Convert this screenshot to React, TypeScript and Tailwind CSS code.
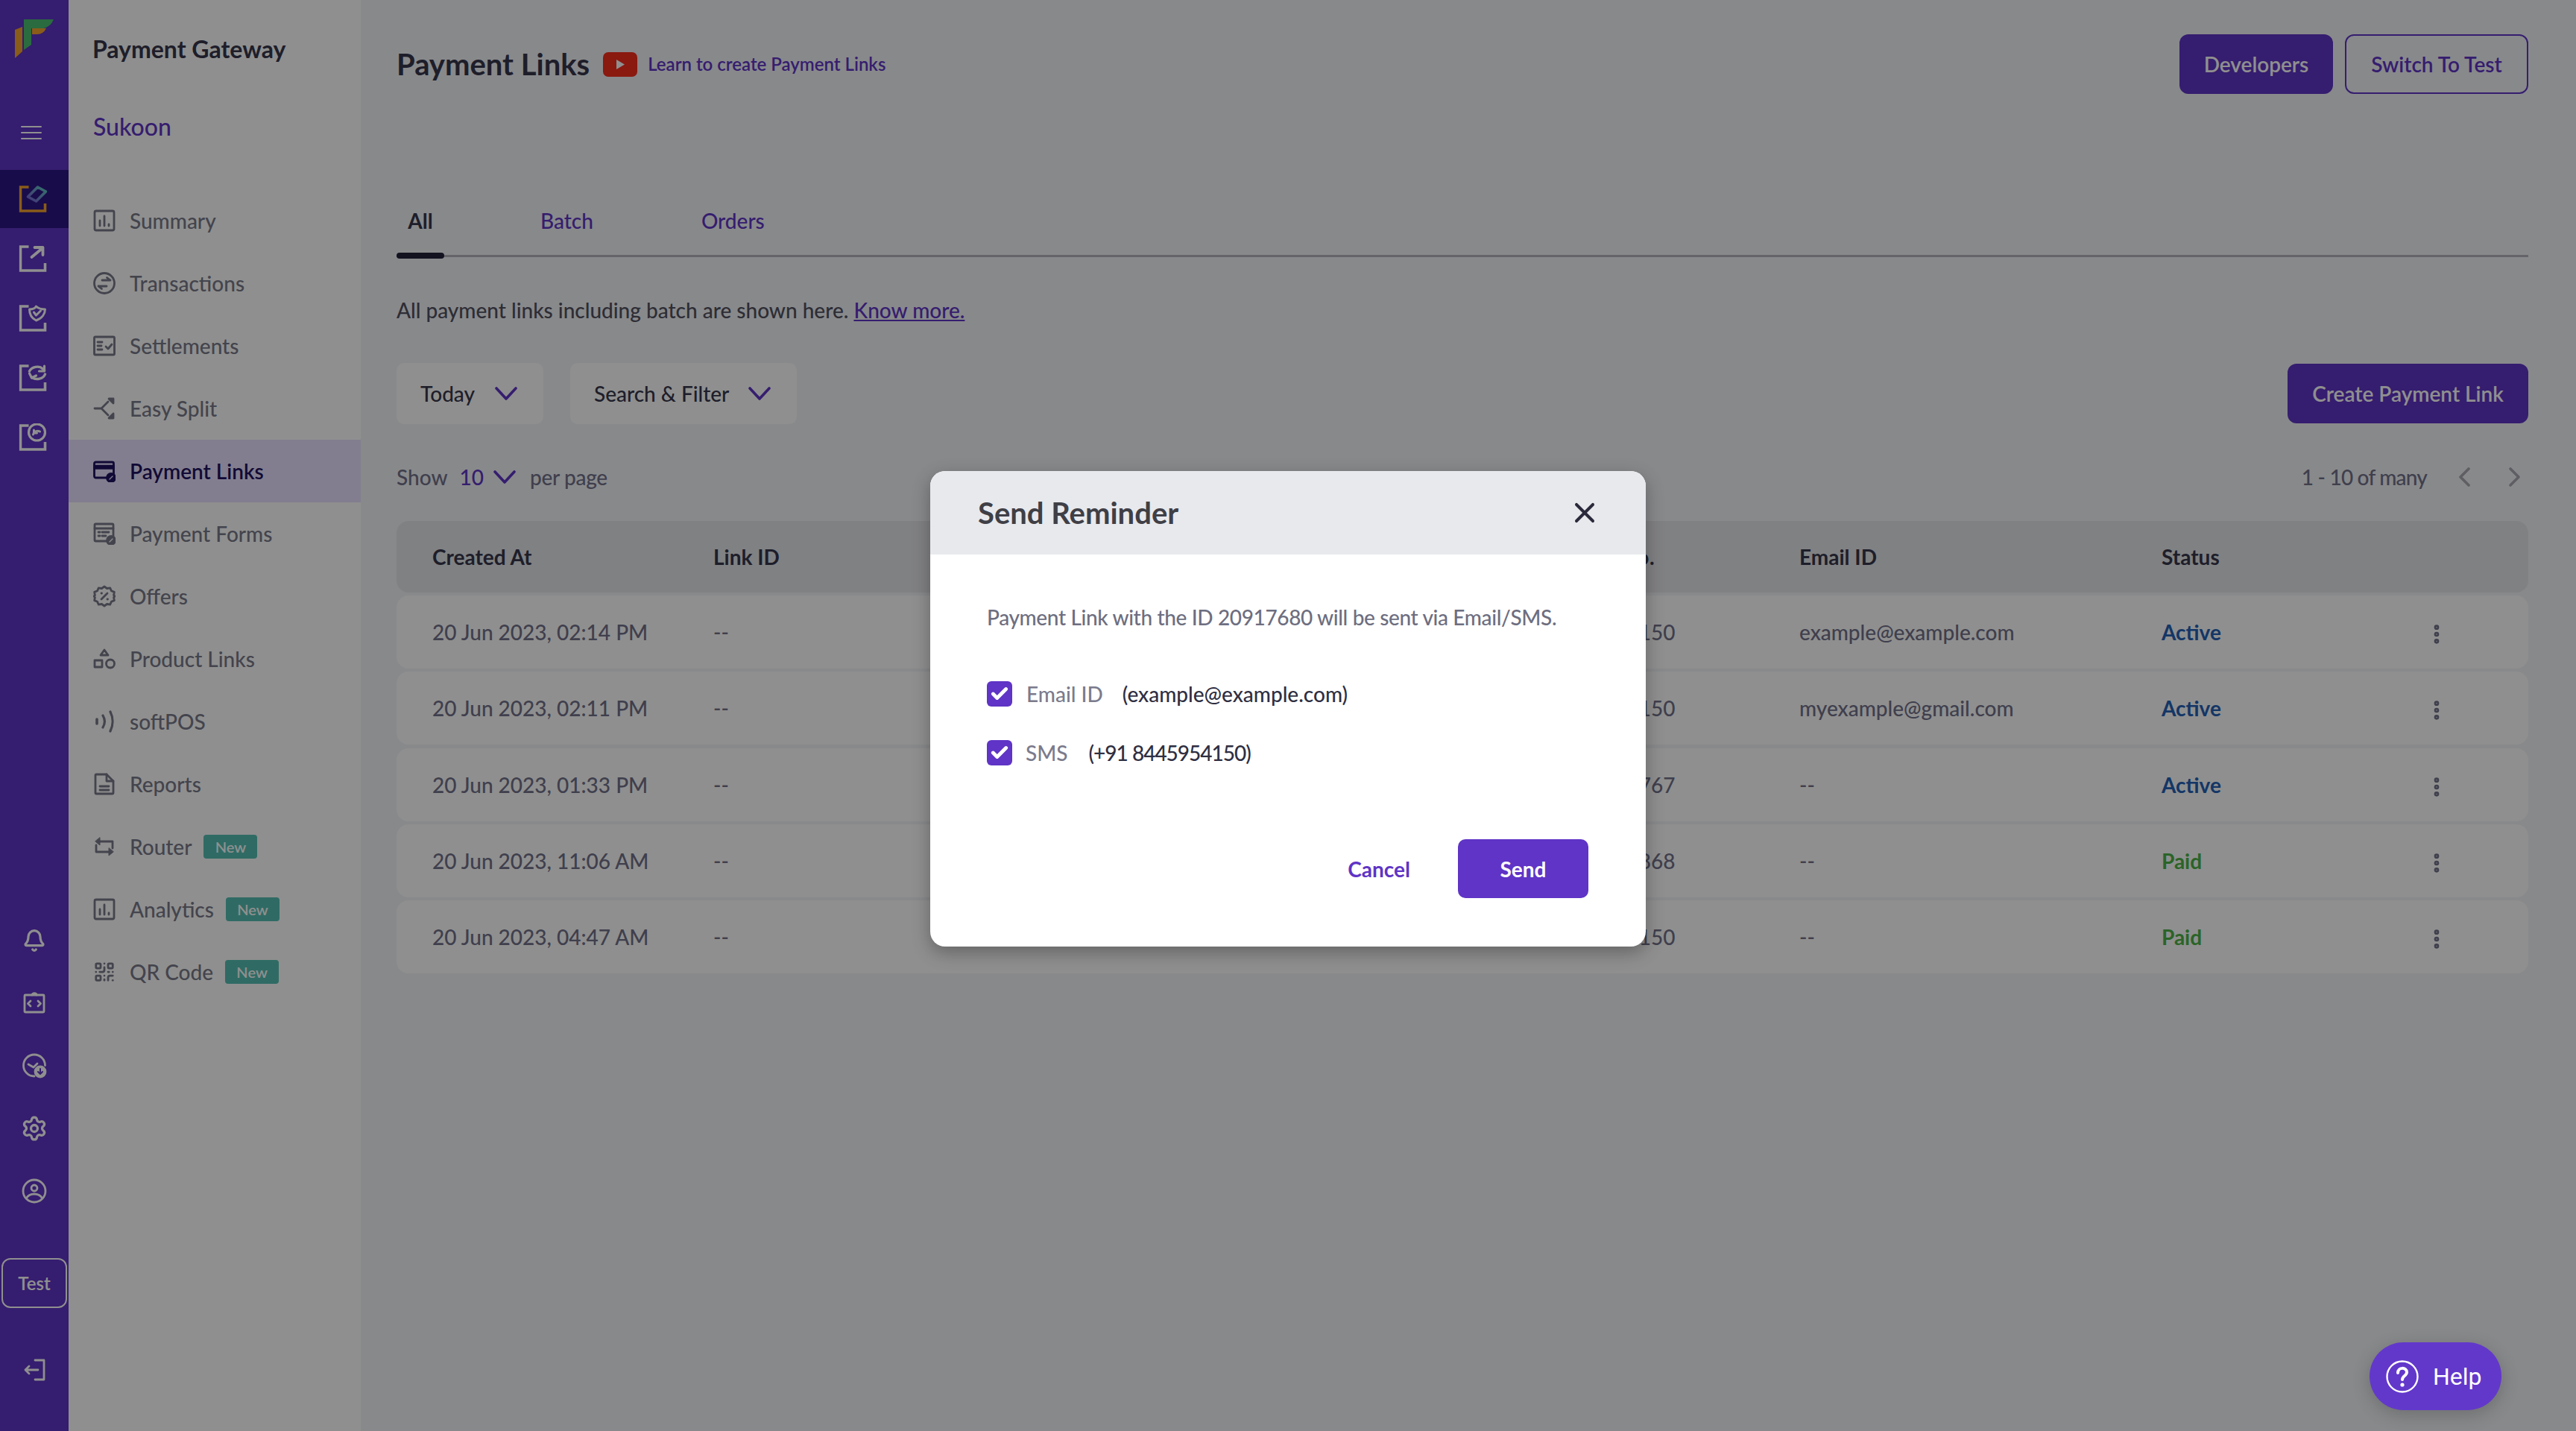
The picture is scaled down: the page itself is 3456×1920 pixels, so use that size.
import { Bell, Check, EllipsisVertical, QrCode, Settings, X } from 'lucide-react'
import type { ReactNode } from 'react'

const font = "font-['Lato',sans-serif]"

function Svg({ children, className = 'w-[30px] h-[30px]' }: { children: ReactNode; className?: string }) {
  return (
    <svg viewBox="0 0 30 30" fill="none" stroke="currentColor" strokeWidth="2.8" strokeLinecap="round" strokeLinejoin="round" className={className}>
      {children}
    </svg>
  )
}

const ChartIcon = () => (
  <Svg>
    <rect x="2" y="2" width="26" height="26" rx="2" />
    <path d="M9 15v7M15 9v13M21 20v2" />
  </Svg>
)
const TransactionsIcon = () => (
  <Svg>
    <circle cx="15" cy="15" r="13.5" />
    <path d="M12 11h11M18.5 7.5 23 11M18 19H7M11.5 22.5 7 19" />
  </Svg>
)
const SettlementsIcon = () => (
  <Svg>
    <rect x="1.5" y="3" width="27" height="24" rx="1.5" />
    <path d="M6 10h6M6 15h5M6 20h6M17 16l3 3 5-6" />
  </Svg>
)
const SplitIcon = () => (
  <Svg>
    <path d="M2 15h9l9-9M11 15l9 9" />
    <path d="M21 2h6v6l-6-6zM21 28h6v-6l-6 6z" fill="currentColor" />
  </Svg>
)
const PaymentLinkIcon = () => (
  <Svg>
    <rect x="1.5" y="3" width="26" height="21" rx="2" />
    <path d="M2 8.5h25M2 11h25" strokeWidth="3.5" />
    <circle cx="24" cy="24" r="5.5" fill="currentColor" />
    <path d="M22 26l4-4" stroke="#e8e1ff" strokeWidth="1.3" />
  </Svg>
)
const PaymentFormIcon = () => (
  <Svg>
    <rect x="2" y="2" width="25" height="23" rx="1.5" />
    <path d="M2 8h25M7 13h2M12 13h9M7 18h2M12 18h5" />
    <circle cx="24" cy="24" r="5.5" fill="currentColor" />
    <path d="M22 26l4-4" stroke="#ffffff" strokeWidth="1.3" />
  </Svg>
)
const OffersIcon = () => (
  <Svg>
    <path d="M15 2l3.5 2.5 4.2-.7 1.7 3.9 3.9 1.7-.7 4.2L29 15l-1.4 1.4.7 4.2-3.9 1.7-1.7 3.9-4.2-.7L15 28l-3.5-2.5-4.2.7-1.7-3.9-3.9-1.7.7-4.2L1 15l1.4-1.4-.7-4.2 3.9-1.7 1.7-3.9 4.2.7z" />
    <path d="M19 11l-8 8M11 11h.5M19 19h.5" />
  </Svg>
)
const ProductIcon = () => (
  <Svg>
    <path d="M15 3l5 7H10z" />
    <rect x="2" y="17" width="10" height="9" />
    <circle cx="23" cy="21.5" r="5.5" />
  </Svg>
)
const SoftPosIcon = () => (
  <Svg>
    <path d="M5 12v6" strokeWidth="3.6" />
    <path d="M13 7c3 5 3 11 0 16M23 2c4 8 4 18 0 26" strokeWidth="3.2" />
  </Svg>
)
const ReportsIcon = () => (
  <Svg>
    <path d="M3 3a1 1 0 0 1 1-1h14l9 9v16a1 1 0 0 1-1 1H4a1 1 0 0 1-1-1z" />
    <path d="M18 2v9h9M9 18h12M9 23h12" />
  </Svg>
)
const RouterIcon = () => (
  <Svg>
    <path d="M9 8H26V17M4 13V22H21" />
    <path d="M9 3v10l-6-5zM21 17v10l6-5z" fill="currentColor" strokeWidth="1" />
  </Svg>
)
const QrIcon = () => <QrCode className="w-[30px] h-[30px]" strokeWidth={2.2} />

type NavItem = { label: string; Icon: () => ReactNode; isNew?: boolean; active?: boolean }

const navItems: NavItem[] = [
  { label: 'Summary', Icon: ChartIcon },
  { label: 'Transactions', Icon: TransactionsIcon },
  { label: 'Settlements', Icon: SettlementsIcon },
  { label: 'Easy Split', Icon: SplitIcon },
  { label: 'Payment Links', Icon: PaymentLinkIcon, active: true },
  { label: 'Payment Forms', Icon: PaymentFormIcon },
  { label: 'Offers', Icon: OffersIcon },
  { label: 'Product Links', Icon: ProductIcon },
  { label: 'softPOS', Icon: SoftPosIcon },
  { label: 'Reports', Icon: ReportsIcon },
  { label: 'Router', Icon: RouterIcon, isNew: true },
  { label: 'Analytics', Icon: ChartIcon, isNew: true },
  { label: 'QR Code', Icon: QrIcon, isNew: true },
]

const rows = [
  { date: '20 Jun 2023, 02:14 PM', phone: '8445954150', email: 'example@example.com', status: 'Active' },
  { date: '20 Jun 2023, 02:11 PM', phone: '8445954150', email: 'myexample@gmail.com', status: 'Active' },
  { date: '20 Jun 2023, 01:33 PM', phone: '9876543767', email: '--', status: 'Active' },
  { date: '20 Jun 2023, 11:06 AM', phone: '9876543868', email: '--', status: 'Paid' },
  { date: '20 Jun 2023, 04:47 AM', phone: '8445954150', email: '--', status: 'Paid' },
]

function RailGlyph({ children, active }: { children: ReactNode; active?: boolean }) {
  return (
    <svg viewBox="0 0 38 38" fill="none" strokeWidth="3.6" strokeLinecap="round" strokeLinejoin="round" className="w-[38px] h-[38px] -translate-x-[1.5px] text-white" stroke="currentColor">
      <path d="M13 3H2v32h33V25" stroke={active ? '#f5a52e' : 'currentColor'} strokeLinecap="butt" strokeLinejoin="miter" />
      {children}
    </svg>
  )
}

function Logo() {
  return (
    <svg viewBox="0 0 52 52" className="w-[52px] h-[52px]">
      <path d="M12 0H52Q48 10 38 12H22V34L12 41Z" fill="#4bbf71" />
      <path d="M0 14L10 10V43L0 52Z" fill="#f5a52e" />
      <path d="M23 12H42Q38 20 30 20H23Z" fill="#f5a52e" />
    </svg>
  )
}

function Rail() {
  return (
    <div className="w-[92px] shrink-0 h-full bg-[#5f34c6] flex flex-col items-center text-white">
      <div className="mt-[26px] h-[52px]">
        <Logo />
      </div>
      <div className="mt-[91px] flex flex-col gap-[6px] w-[28px] -translate-x-[4px]">
        <div className="h-[2px] bg-white rounded-full" />
        <div className="h-[2px] bg-white rounded-full" />
        <div className="h-[2px] bg-white rounded-full" />
      </div>
      <div className="mt-[41px] w-full flex flex-col">
        <div className="h-[78px] bg-[#2d1786] flex items-center justify-center">
          <RailGlyph active>
            <defs>
              <linearGradient id="d" x1="0" y1="1" x2="1" y2="0">
                <stop offset="0" stopColor="#7a5fd8" />
                <stop offset="1" stopColor="#5fd0c0" />
              </linearGradient>
            </defs>
            <path d="M12 16 25 3l11 6-13 13z" stroke="url(#d)" />
          </RailGlyph>
        </div>
        <div className="h-[80px] mt-[1px] flex items-center justify-center">
          <RailGlyph>
            <path d="M17 17 29 7M21 4h11v10" strokeWidth="3.8" />
          </RailGlyph>
        </div>
        <div className="h-[80px] flex items-center justify-center">
          <RailGlyph>
            <path d="M14 7c5 0 8-2 9-4 2 2 6 4 12 4 0 6-4 12-12 15-6-3-9-9-9-15z" strokeWidth="3" />
            <path d="M20 11l3 4 6-6" strokeWidth="3" />
          </RailGlyph>
        </div>
        <div className="h-[80px] flex items-center justify-center">
          <RailGlyph>
            <path d="M14 10c3-6 13-8 18-3l2 2M35 14c-2 6-12 9-18 4" strokeWidth="3.4" />
            <path d="M34 3v7h-7M14 13l3 6 6-3" strokeWidth="3.2" />
          </RailGlyph>
        </div>
        <div className="h-[80px] flex items-center justify-center">
          <RailGlyph>
            <circle cx="24" cy="12" r="11" strokeWidth="3.2" />
            <path d="M19 15c1-4 5-6 9-4M20 9v4h4" strokeWidth="3" />
          </RailGlyph>
        </div>
      </div>
      <div className="mt-auto w-full flex flex-col items-center">
        <div className="h-[84px] flex items-center justify-center">
          <Bell className="w-[32px] h-[34px]" strokeWidth={2.4} />
        </div>
        <div className="h-[84px] flex items-center justify-center">
          <svg viewBox="0 0 30 30" fill="none" stroke="currentColor" strokeWidth="2.8" strokeLinecap="round" strokeLinejoin="round" className="w-[30px] h-[30px]">
            <rect x="2" y="4" width="26" height="23" rx="1" />
            <path d="M12 4c0-3 6-3 6 0M10 12l-3.5 3.5L10 19M20 12l3.5 3.5L20 19" />
          </svg>
        </div>
        <div className="h-[84px] flex items-center justify-center">
          <svg viewBox="0 0 34 34" fill="none" stroke="currentColor" strokeWidth="2.8" strokeLinecap="round" strokeLinejoin="round" className="w-[34px] h-[34px]">
            <path d="M17 31a14.5 14.5 0 1 1 14.5-14.5" />
            <path d="M9 15l7 4 5-5" />
            <circle cx="25" cy="25" r="7" fill="currentColor" />
            <path d="M25 21v7M22 25l3 3 3-3" stroke="#5f34c6" strokeWidth="2" />
          </svg>
        </div>
        <div className="h-[84px] flex items-center justify-center">
          <Settings className="w-[36px] h-[36px]" strokeWidth={2.2} />
        </div>
        <div className="h-[84px] flex items-center justify-center">
          <svg viewBox="0 0 34 34" fill="none" stroke="currentColor" strokeWidth="2.8" className="w-[34px] h-[34px]">
            <circle cx="17" cy="17" r="15" />
            <circle cx="17" cy="13" r="4" />
            <path d="M6 27c3-5 7-6 11-6s8 1 11 6" />
          </svg>
        </div>
      </div>
      <div className="mt-[48px] w-[88px] h-[67px] border-[2px] border-white rounded-[12px] flex items-center justify-center text-[24px] font-semibold">
        Test
      </div>
      <div className="mt-[68px] mb-[67px] h-[30px]">
        <svg viewBox="0 0 30 30" fill="none" stroke="currentColor" strokeWidth="2.8" strokeLinecap="round" strokeLinejoin="round" className="w-[30px] h-[30px]">
          <path d="M16 2h12v26H16M20 15H3M8 10l-5 5 5 5" />
        </svg>
      </div>
    </div>
  )
}

function SubNav() {
  return (
    <div className="w-[392px] shrink-0 h-full bg-white flex flex-col">
      <div className="pl-[32px] mt-[46px] h-[40px] leading-[40px] text-[32px] font-bold text-[#36364b]">Payment Gateway</div>
      <div className="pl-[33px] mt-[64px] h-[40px] leading-[40px] text-[32px] font-medium text-[#5f34c6]">Sukoon</div>
      <div className="mt-[64px] flex flex-col">
        {navItems.map((item) => (
          <div key={item.label} className={item.active ? 'h-[84px] pl-[33px] flex items-center bg-[#e8e1ff] text-[#1f1260]' : 'h-[84px] pl-[33px] flex items-center text-[#787989]'}>
            <span className="w-[30px] flex justify-center">
              <item.Icon />
            </span>
            <span className={item.active ? 'ml-[19px] text-[28px] font-semibold' : 'ml-[19px] text-[28px] font-medium'}>{item.label}</span>
            {item.isNew && (
              <span className="ml-[16px] w-[72px] h-[32px] rounded-[4px] bg-[#54bfb3] text-white text-[20px] font-semibold flex items-center justify-center">New</span>
            )}
          </div>
        ))}
      </div>
    </div>
  )
}

const Chevron = () => (
  <svg viewBox="0 0 30 18" fill="none" stroke="currentColor" strokeWidth="3.6" strokeLinecap="round" strokeLinejoin="round" className="w-[30px] h-[18px] text-[#5f34c6]">
    <path d="M2 2l13 14L28 2" />
  </svg>
)

const PageChevron = ({ d }: { d: string }) => (
  <svg viewBox="0 0 18 28" fill="none" stroke="currentColor" strokeWidth="3.6" strokeLinecap="round" strokeLinejoin="round" className="w-[18px] h-[28px] text-[#a8a8b0]">
    <path d={d} />
  </svg>
)

function Table() {
  const grid = 'grid grid-cols-[377px_1128px_329px_486px_353px_1fr] items-center pl-[48px] text-[28px] rounded-[16px]'
  return (
    <div className="mt-[39px] flex flex-col gap-[4.2px]">
      <div className={`${grid} h-[96px] bg-[#e5e7ea] font-bold text-[#36364b]`}>
        <span>Created At</span>
        <span>Link ID</span>
        <span className="tracking-[0.5px]">Phone No.</span>
        <span>Email ID</span>
        <span>Status</span>
        <span />
      </div>
      {rows.map((r) => (
        <div key={r.date} className={`${grid} h-[98px] bg-white font-medium text-[#70708a]`}>
          <span>{r.date}</span>
          <span>--</span>
          <span>{r.phone}</span>
          <span>{r.email}</span>
          <span className={r.status === 'Active' ? 'font-bold text-[#2460b6]' : 'font-bold text-[#4db247]'}>{r.status}</span>
          <EllipsisVertical className="w-[32px] h-[32px] mt-[6px] text-[#70708a]" strokeWidth={3} />
        </div>
      ))}
    </div>
  )
}

function Main() {
  return (
    <div className="flex-1 h-full bg-[#f3f5f8] pl-[48px] pr-[64px] pt-[46px]">
      <div className="flex items-center h-[80px]">
        <h1 className="text-[40px] font-bold text-[#36364b]">Payment Links</h1>
        <svg viewBox="0 0 46 33" className="ml-[18px] w-[46px] h-[33px]">
          <rect width="46" height="33" rx="7" fill="#f62e1d" />
          <path d="M18 10l11 6.5L18 23z" fill="#ffffff" />
        </svg>
        <span className="ml-[14px] text-[24px] font-semibold text-[#5f34c6]">Learn to create Payment Links</span>
        <div className="ml-auto flex gap-[16px]">
          <button className="h-[80px] w-[206px] rounded-[12px] bg-[#5f34c6] text-white text-[28px] font-semibold">Developers</button>
          <button className="h-[80px] w-[246px] rounded-[12px] border-[2px] border-[#5f34c6] text-[#5f34c6] text-[28px] font-semibold">Switch To Test</button>
        </div>
      </div>
      <div className="relative mt-[126px] h-[93px] border-b-[3px] border-[#b5b5bb] flex items-start pt-[23px] text-[28px] font-medium">
        <div className="w-[64px] text-center text-[#36364b] font-bold">All</div>
        <div className="ml-[129px] text-[#5f34c6]">Batch</div>
        <div className="ml-[145px] text-[#5f34c6]">Orders</div>
        <div className="absolute left-0 -bottom-[5px] w-[64px] h-[8px] rounded-full bg-[#21213a]" />
      </div>
      <p className="mt-[51px] h-[40px] leading-[40px] text-[28px] font-medium text-[#50505f]">
        All payment links including batch are shown here. <span className="text-[#5f34c6] underline">Know more.</span>
      </p>
      <div className="mt-[51px] flex items-center">
        <div className="h-[82px] w-[197px] rounded-[10px] bg-white pl-[32px] flex items-center gap-[27px] text-[28px] font-medium text-[#36364b]">
          Today
          <Chevron />
        </div>
        <div className="ml-[36px] h-[82px] w-[304px] rounded-[10px] bg-white pl-[32px] flex items-center gap-[26px] text-[28px] font-medium text-[#36364b]">
          Search &amp; Filter
          <Chevron />
        </div>
        <button className="ml-auto h-[80px] w-[323px] rounded-[12px] bg-[#5f34c6] text-white text-[28px] font-semibold">Create Payment Link</button>
      </div>
      <div className="mt-[51px] h-[40px] flex items-center text-[28px] font-medium text-[#70708a]">
        <span>Show</span>
        <span className="ml-[16px] text-[#5f34c6]">10</span>
        <span className="ml-[13px] flex">
          <Chevron />
        </span>
        <span className="ml-[19px] tracking-[-0.3px]">per page</span>
        <span className="ml-auto tracking-[-0.8px]">1 - 10 of many</span>
        <span className="ml-[41px]">
          <PageChevron d="M15 3 4 14l11 11" />
        </span>
        <span className="ml-[50px] mr-[9px]">
          <PageChevron d="M3 3l11 11L3 25" />
        </span>
      </div>
      <Table />
    </div>
  )
}

function Modal() {
  return (
    <div className="absolute inset-0 bg-black/[0.44] flex justify-center items-start pt-[632px]">
      <div className="w-[960px] h-[638px] bg-white rounded-[20px] overflow-hidden shadow-[0_8px_24px_rgba(0,0,0,0.3)] flex flex-col">
        <div className="h-[112px] shrink-0 bg-[#e8e9ed] pl-[64px] pr-[60px] flex items-center justify-between">
          <span className="text-[40px] font-bold text-[#3f3f46]">Send Reminder</span>
          <X className="w-[44px] h-[44px] text-[#2a2a3c]" strokeWidth={2.2} />
        </div>
        <div className="flex-1 pl-[76px] pr-[77px] pt-[66px] flex flex-col text-[28px] font-medium">
          <p className="h-[36px] leading-[36px] text-[#6d6e80] tracking-[-0.36px]">Payment Link with the ID 20917680 will be sent via Email/SMS.</p>
          <div className="mt-[68px] h-[34px] flex items-center">
            <span className="w-[34px] h-[34px] rounded-[6px] bg-[#5f34c6] flex items-center justify-center">
              <Check className="w-[26px] h-[26px] text-white" strokeWidth={4.5} />
            </span>
            <span className="ml-[19px] text-[#7b7b8c]">Email ID</span>
            <span className="ml-[26px] text-[#2f2f42]">(example@example.com)</span>
          </div>
          <div className="mt-[45px] h-[34px] flex items-center">
            <span className="w-[34px] h-[34px] rounded-[6px] bg-[#5f34c6] flex items-center justify-center">
              <Check className="w-[26px] h-[26px] text-white" strokeWidth={4.5} />
            </span>
            <span className="ml-[18px] text-[#7b7b8c]">SMS</span>
            <span className="ml-[28px] text-[#2f2f42] tracking-[-1px]">(+91 8445954150)</span>
          </div>
          <div className="mt-[99px] flex items-center justify-end">
            <span className="text-[#5f34c6] font-bold">Cancel</span>
            <button className="ml-[64px] w-[175px] h-[79px] rounded-[10px] bg-[#5f34c6] text-white font-bold">Send</button>
          </div>
        </div>
      </div>
    </div>
  )
}

function HelpButton() {
  return (
    <button className="absolute left-[3179px] top-[1801px] w-[177px] h-[91px] rounded-full bg-[#6238cb] text-white flex items-center pl-[22px] shadow-[0_6px_24px_rgba(0,0,0,0.2)] font-['Roboto',sans-serif]">
      <svg viewBox="0 0 44 44" fill="none" stroke="currentColor" className="w-[44px] h-[44px]">
        <circle cx="22" cy="22" r="20.5" strokeWidth="2.4" />
        <path d="M16 17c0-8 12-8 12-1 0 5-6 5-6 10" strokeWidth="4" strokeLinecap="round" />
        <circle cx="22" cy="33" r="2.6" fill="currentColor" stroke="none" />
      </svg>
      <span className="ml-[19px] text-[32px]">Help</span>
    </button>
  )
}

export default function App() {
  return (
    <div className={`relative w-[3456px] h-[1920px] overflow-hidden flex ${font}`}>
      <Rail />
      <SubNav />
      <Main />
      <Modal />
      <HelpButton />
    </div>
  )
}
